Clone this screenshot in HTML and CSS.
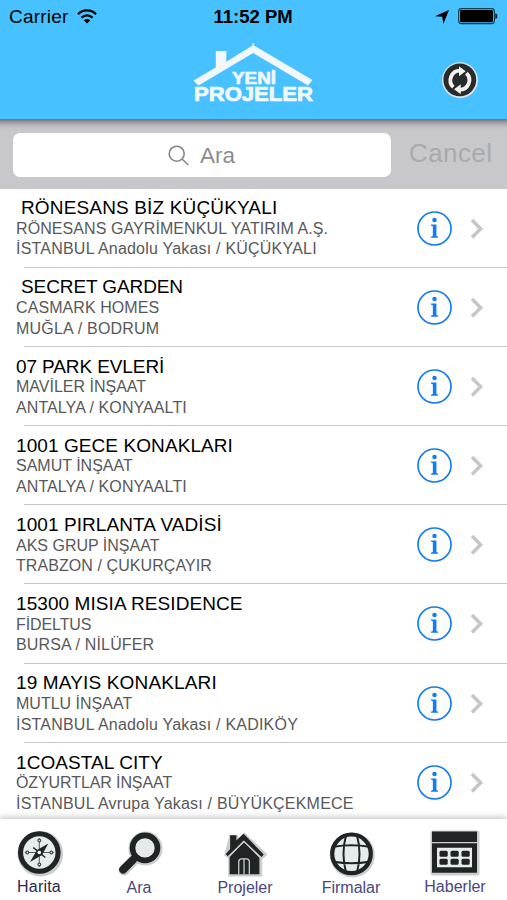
FILE: index.html
```html
<!DOCTYPE html>
<html lang="tr">
<head>
<meta charset="utf-8">
<title>Yeni Projeler</title>
<link rel="stylesheet" href="styles.css">
</head>
<body>
<svg class="defs" aria-hidden="true">
  <symbol id="info" viewBox="0 0 36 36">
    <circle cx="18" cy="18" r="17" fill="none" stroke="#147cf0" stroke-width="1.7"/>
    <circle cx="18" cy="9.300" r="2.300" fill="#147cf0"/>
    <path d="M14.500 14h5.500v11.800l1.700.6v1.200h-7.400v-1.200l2-.6V15.700l-1.800-.5z" fill="#147cf0"/>
  </symbol>
  <symbol id="chevron" viewBox="0 0 14 22">
    <path d="M2 2l8.600 8.700L2 19.400" fill="none" stroke="#c6c6c8" stroke-width="3.500"/>
  </symbol>
</svg>
<header class="header">
  <div class="status">
    <span class="carrier">Carrier</span>
    <svg class="wifi" viewBox="0 0 20 15"><g fill="none" stroke="#000" stroke-width="2.200"><path d="M1 5.200a12.700 12.700 0 0 1 18 0"/><path d="M4.400 8.700a8 8 0 0 1 11.200 0"/></g><path d="M6.800 11.200a4.600 4.600 0 0 1 6.400 0L10 14.400z"/></svg>
    <span class="time">11:52 PM</span>
    <svg class="arrow" viewBox="0 0 14 14"><path d="M14 0L8.300 14 7.300 6.800 0 6.300z"/></svg>
    <svg class="battery" viewBox="0 0 40 17"><rect x=".6" y=".6" width="35.800" height="15" rx="2.800" fill="none" stroke="#073d55" stroke-width="1.100"/><rect x="2" y="2" width="33" height="12.200" rx="1.400"/><path d="M37.400 5.200q2 .4 2 2.900t-2 2.900z"/></svg>
  </div>
  <div class="bar">
    <svg class="logo" viewBox="0 0 122 62" fill="#f2f7fb">
      <path d="M.5 37.500L22.800 24.500V8h10.500v10.700L59.500 2.500V0H61v2.500L119.500 37l-4.500 5.500L60.200 10 5.500 42.500z"/>
      <text x="39" y="41.300" textLength="44" lengthAdjust="spacingAndGlyphs" class="logo-top">YENİ</text>
      <text x="1" y="57.500" textLength="119" lengthAdjust="spacingAndGlyphs" class="logo-main">PROJELER</text>
    </svg>
    <svg class="refresh" viewBox="0 0 38 38">
      <circle cx="19" cy="19.200" r="18" fill="#dce3e6"/><circle cx="18.800" cy="18.800" r="16.400" fill="#282a2b"/>
      <g fill="none" stroke="#f2f2f0" stroke-width="3.800"><path d="M12.300 26.200a9.600 9.600 0 0 1 6.700-16.500"/><path d="M25.400 12.200a9.600 9.600 0 0 1-6.700 16.500"/></g>
      <path d="M18 5.200l6.600 5-6.600 5zM19.700 23.200v10l-6.600-5z" fill="#f2f2f0"/>
    </svg>
  </div>
</header>
<div class="search">
  <div class="field">
    <svg class="glass" viewBox="0 0 22 22"><circle cx="8.700" cy="8.700" r="7.500"/><path d="M14 14l6.300 6"/></svg>
    <span class="placeholder">Ara</span>
  </div>
  <span class="cancel">Cancel</span>
</div>
<main class="list">
  <article class="row"><div class="text"><h2 class="indent loose">RÖNESANS BİZ KÜÇÜKYALI</h2><p class="slight">RÖNESANS GAYRİMENKUL YATIRIM A.Ş.</p><p class="wide">İSTANBUL Anadolu Yakası / KÜÇÜKYALI</p></div><svg class="info"><use href="#info"/></svg><svg class="chevron"><use href="#chevron"/></svg></article>
  <article class="row"><div class="text"><h2 class="indent tight">SECRET GARDEN</h2><p class="slight">CASMARK HOMES</p><p class="wide">MUĞLA / BODRUM</p></div><svg class="info"><use href="#info"/></svg><svg class="chevron"><use href="#chevron"/></svg></article>
  <article class="row"><div class="text"><h2 class="tight">07 PARK EVLERİ</h2><p>MAVİLER İNŞAAT</p><p class="slight">ANTALYA / KONYAALTI</p></div><svg class="info"><use href="#info"/></svg><svg class="chevron"><use href="#chevron"/></svg></article>
  <article class="row"><div class="text"><h2 class="slight">1001 GECE KONAKLARI</h2><p>SAMUT İNŞAAT</p><p class="slight">ANTALYA / KONYAALTI</p></div><svg class="info"><use href="#info"/></svg><svg class="chevron"><use href="#chevron"/></svg></article>
  <article class="row"><div class="text"><h2 class="slight">1001 PIRLANTA VADİSİ</h2><p>AKS GRUP İNŞAAT</p><p class="slight">TRABZON / ÇUKURÇAYIR</p></div><svg class="info"><use href="#info"/></svg><svg class="chevron"><use href="#chevron"/></svg></article>
  <article class="row"><div class="text"><h2 class="slight">15300 MISIA RESIDENCE</h2><p class="tight">FİDELTUS</p><p class="loose">BURSA / NİLÜFER</p></div><svg class="info"><use href="#info"/></svg><svg class="chevron"><use href="#chevron"/></svg></article>
  <article class="row"><div class="text"><h2 class="loose">19 MAYIS KONAKLARI</h2><p>MUTLU İNŞAAT</p><p class="wide">İSTANBUL Anadolu Yakası / KADIKÖY</p></div><svg class="info"><use href="#info"/></svg><svg class="chevron"><use href="#chevron"/></svg></article>
  <article class="row"><div class="text"><h2 class="slight">1COASTAL CITY</h2><p class="tight">ÖZYURTLAR İNŞAAT</p><p class="wide">İSTANBUL Avrupa Yakası / BÜYÜKÇEKMECE</p></div><svg class="info"><use href="#info"/></svg><svg class="chevron"><use href="#chevron"/></svg></article>
</main>
<nav class="tabs">
  <a class="tab active">
    <svg viewBox="0 0 48 48"><circle cx="25.300" cy="24.800" r="22.800" fill="#c9cdcc"/><circle cx="24.300" cy="23.500" r="21.300" fill="#202425"/><circle cx="24.300" cy="23.500" r="16.200" fill="#e6ebec"/><path d="M24.300 9v29M9.800 23.500h29" stroke="#555c5e" stroke-width="1"/><g fill="#ddd" stroke="#4a5052" stroke-width="1.200"><circle cx="24.300" cy="11.500" r="1.400"/><circle cx="24.300" cy="35.500" r="1.400"/><circle cx="12.300" cy="23.500" r="1.400"/><circle cx="36.300" cy="23.500" r="1.400"/></g><path d="M33.300 14.500L27 26l-12 7L22 21z" fill="#1f2425"/><path d="M18.300 18.500l12 10" stroke="#1f2425" stroke-width="1.500"/><circle cx="24.300" cy="23.500" r="1.800" fill="#fff"/></svg>
    <span>Harita</span>
  </a>
  <a class="tab">
    <svg viewBox="0 0 48 48"><g fill="none" stroke="#c9cdcc" stroke-linecap="round"><circle cx="30.500" cy="18.500" r="13" stroke-width="8"/><path d="M8.800 40.300L20 29" stroke-width="10.500"/></g><circle cx="30" cy="17.900" r="12.500" fill="#e4eaec" stroke="#202425" stroke-width="5.600"/><path d="M8.200 39.600L17.800 30" stroke="#202425" stroke-width="8" stroke-linecap="round"/></svg>
    <span>Ara</span>
  </a>
  <a class="tab">
    <svg viewBox="0 0 50 48"><path d="M9.500 5H17v4.500L24.500 3 47 24.500 43.500 28H42v18.500H8.500V28L4.500 25z" fill="#c9cdcc" stroke="#c9cdcc" stroke-width="2" stroke-linejoin="round"/><path d="M9.500 4.500h6.500V10l7.500-7L44.500 24.500l-2.500 3-18.500-17.500-16 17-2.500-3 4.500-5z" fill="#202425"/><path d="M24 11.500L40 27.800V45H9V27z" fill="#202425"/><path d="M6.500 27.500L24 11 41.500 27.500M18.500 45V32q0-3 3-3h5q3 0 3 3v13M24 29v16" fill="none" stroke="#cfd3d2" stroke-width="1.300"/></svg>
    <span>Projeler</span>
  </a>
  <a class="tab">
    <svg viewBox="0 0 48 48"><circle cx="25.300" cy="25" r="22.500" fill="#c9cdcc"/><circle cx="24.500" cy="23.800" r="19.300" fill="#e6ebec" stroke="#202425" stroke-width="4.200"/><g fill="none" stroke="#202425" stroke-width="2"><path d="M19 5.500q-5 18 0 37M30 5.500q5 18 0 37M6.500 16.800q18-3 36 0M6.500 31.800q18 3 36 0"/></g></svg>
    <span>Firmalar</span>
  </a>
  <a class="tab raised">
    <svg viewBox="0 0 48 48"><rect x="-.5" y="1.500" width="49" height="45" rx="2.500" fill="#c9cdcc"/><path d="M1 2.500h45V13H1z" fill="#202425"/><path d="M1 14.300h45v29.500H1z" fill="#202425"/><path d="M6 18.800h35v19.500H6z" fill="#e6ebec"/><g fill="#202425"><rect x="8.500" y="21.800" width="8.200" height="6" rx="1.500"/><rect x="19.500" y="21.800" width="8.200" height="6" rx="1.500"/><rect x="30.500" y="21.800" width="8.200" height="6" rx="1.500"/><rect x="8.500" y="29.800" width="8.200" height="6" rx="1.500"/><rect x="19.500" y="29.800" width="8.200" height="6" rx="1.500"/><rect x="30.500" y="29.800" width="8.200" height="6" rx="1.500"/></g></svg>
    <span>Haberler</span>
  </a>
</nav>
</body>
</html>
```
FILE: styles.css
```css
* { box-sizing: border-box; }
body {
  margin: 0;
  width: 507px;
  height: 900px;
  overflow: hidden;
  display: flex;
  flex-direction: column;
  background: #fff;
  font-family: "Liberation Sans", Arial, sans-serif;
}
svg { display: block; flex: none; overflow: visible; }
.defs { position: absolute; width: 0; height: 0; }
.header {
  flex: none;
  height: 119px;
  background: #47c1ff;
}
.status {
  display: flex;
  align-items: center;
  height: 33px;
  padding: 0 9px;
  font-size: 19px;
}
.carrier { width: 60px; letter-spacing: .2px; }
.wifi { width: 20px; height: 15px; margin-left: 9px; }
.time { margin-left: 116px; width: 84px; font-weight: bold; font-size: 18.500px; white-space: nowrap; }
.arrow { width: 14px; height: 14px; margin-left: 138.500px; }
.battery { width: 40px; height: 17px; margin-left: 9px; }
.bar { display: flex; }
.logo { width: 122px; height: 62px; margin: 10px 0 0 193px; }
.logo text { font-weight: bold; stroke: #f2f7fb; stroke-width: .7px; }
.logo-top { font-size: 16.500px; }
.logo-main { font-size: 19.500px; }
.refresh { width: 38px; height: 38px; margin: 28px 0 0 126px; }
.search {
  flex: none;
  display: flex;
  height: 69.500px;
  padding: 14px 0 0 13px;
  background: linear-gradient(#727276 0, #98989c 3px, #b5b5ba 6px, #c3c3c8 9px, #c7c7cc 12px);
}
.field {
  display: flex;
  width: 378px;
  height: 44px;
  padding: 12px 0 0 155px;
  border-radius: 7px;
  background: #fff;
}
.glass { width: 22px; height: 22px; fill: none; stroke: #85858a; stroke-width: 1.600; }
.placeholder { margin-left: 10px; font-size: 22.500px; line-height: 22px; color: #8b8b90; }
.cancel { margin: 5px 0 0 18px; font-size: 26px; line-height: 30px; letter-spacing: .4px; color: #a9a9ae; }
.list { flex: 1; min-height: 0; overflow: hidden; }
.row {
  display: flex;
  height: 79.200px;
  background: linear-gradient(#c8c8cc, #c8c8cc) 24px 100% / 483px 1px no-repeat;
}
.text { width: 400.500px; margin-left: 16px; padding-top: 9.800px; white-space: nowrap; }
h2, p { margin: 0; font-weight: normal; }
h2 { font-size: 19px; line-height: 20.500px; color: #000; }
.indent { padding-left: 5px; }
p { font-size: 16px; line-height: 20.600px; color: #58585a; }
.tight { letter-spacing: -.1px; }
.slight { letter-spacing: .08px; }
.loose { letter-spacing: .15px; }
.wide { letter-spacing: .21px; }
.info { width: 35px; height: 35px; margin-top: 22px; }
.chevron { width: 14px; height: 22px; margin: 29px 0 0 18.500px; }
.tabs {
  position: relative;
  flex: none;
  display: flex;
  height: 81px;
  background: #fff;
  box-shadow: 0 -1px 7px rgba(0, 0, 0, .28);
}
.tab {
  display: flex;
  flex-direction: column;
  align-items: center;
  width: 104px;
  padding-top: 11px;
  color: #494780;
  font-size: 16px;
  line-height: 20px;
}
.tab:first-child { width: 78px; margin-right: 9px; padding-top: 10px; letter-spacing: .2px; }
.tab:nth-child(3) { width: 108px; }
.raised { padding-top: 10px; }
.active { color: #292750; }
.tab svg { width: 48px; height: 48px; }
```
